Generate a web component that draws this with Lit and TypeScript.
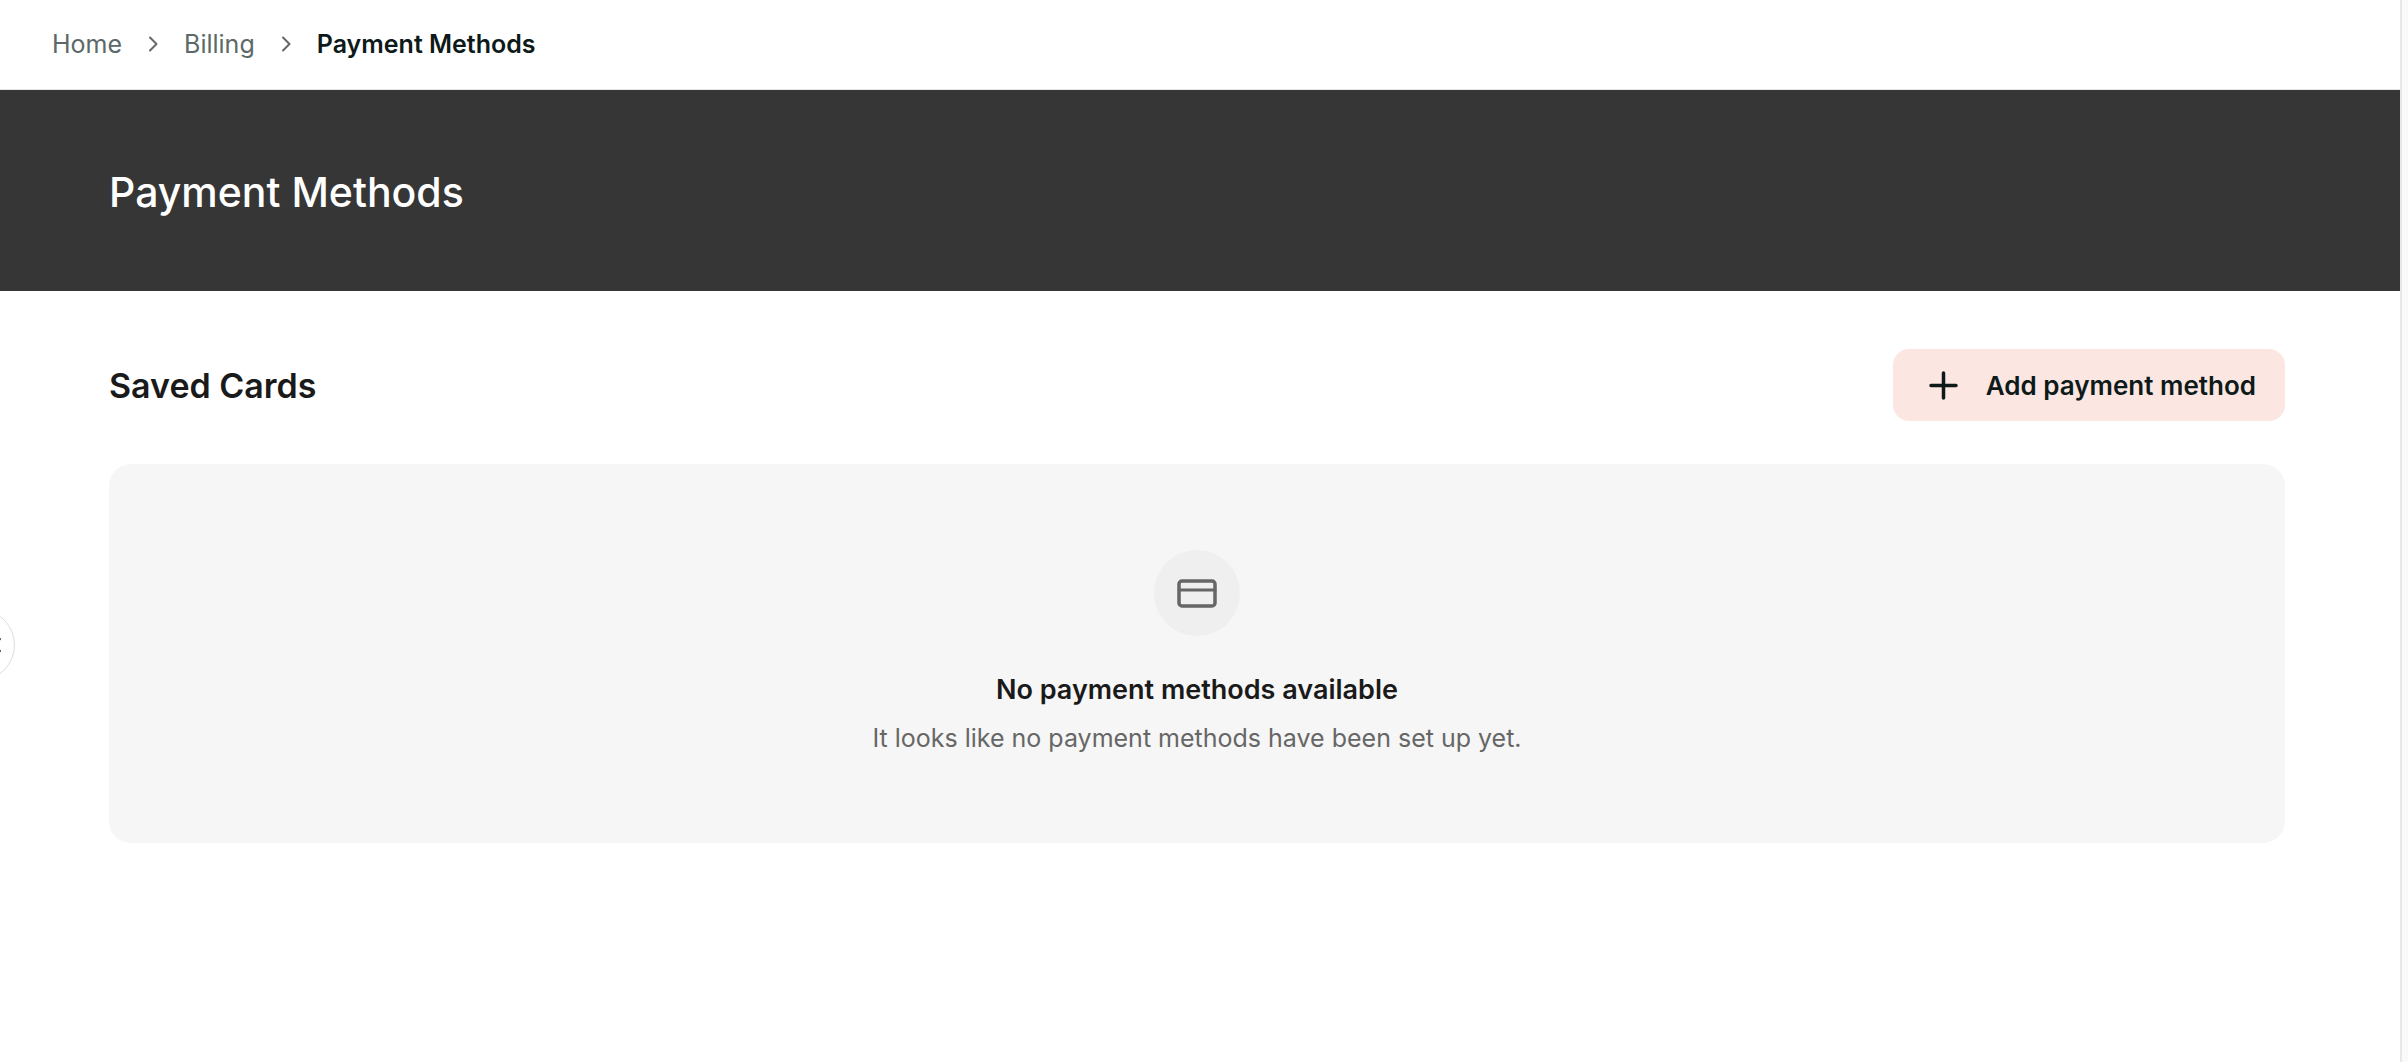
import { LitElement, html, css, svg } from "lit";
import { customElement } from "lit/decorators.js";

const chevronRight = html`<svg class="chevron" viewBox="0 0 10 18" aria-hidden="true">
  ${svg`<path d="M2 2.500l6.500 6.500-6.500 6.500" />`}
</svg>`;

@customElement("app-root")
export class AppRoot extends LitElement {
  static styles = css`
    :host {
      display: block;
      font-family: Inter, "Liberation Sans", sans-serif;
      color: #1a1a1a;
      background: #fafafa;
    }
    * {
      box-sizing: border-box;
    }
    svg {
      display: block;
      fill: none;
      stroke: currentColor;
      stroke-linecap: round;
      stroke-linejoin: round;
      flex: none;
    }
    .panel {
      position: relative;
      min-height: 100vh;
      margin-right: 6px;
      border-right: 2px solid #e8e8e8;
      background: #fff;
    }
    .crumbs {
      border-bottom: 1px solid #dfe6e4;
      padding: 28px 52px 29px;
    }
    .crumbs ol {
      display: flex;
      align-items: center;
      gap: 26px;
      margin: 0;
      padding: 0;
      list-style: none;
      font-size: 25px;
      line-height: 32px;
    }
    .crumbs li {
      display: flex;
      align-items: center;
      gap: 26px;
    }
    .crumbs a {
      color: #5c6968;
      text-decoration: none;
    }
    .crumbs .current {
      color: #0d1a19;
      font-weight: 600;
    }
    .chevron {
      width: 10px;
      height: 18px;
      stroke: #666;
      stroke-width: 2;
    }
    .hero {
      background: #363636;
      padding: 76px 109px 73px;
    }
    .hero h1 {
      margin: 0;
      color: #fff;
      font-size: 41px;
      font-weight: 500;
      line-height: 52px;
    }
    .content {
      padding: 58px 115px 58px 109px;
    }
    .heading {
      display: flex;
      align-items: center;
      justify-content: space-between;
      margin-bottom: 43px;
    }
    .heading h2 {
      margin: 0;
      padding-top: 2px;
      font-size: 34px;
      font-weight: 600;
      line-height: 44px;
    }
    .add {
      display: flex;
      align-items: center;
      gap: 28px;
      height: 72px;
      border: 0;
      border-radius: 16px;
      padding: 0 29px 0 36px;
      background: #fbe6e1;
      color: #0d1a19;
      font: 600 26px/32px Inter, "Liberation Sans", sans-serif;
      cursor: pointer;
    }
    .add span {
      padding-top: 2px;
    }
    .plus {
      width: 29px;
      height: 29px;
      stroke-width: 3.500;
    }
    .empty {
      display: flex;
      flex-direction: column;
      align-items: center;
      border-radius: 22px;
      padding: 86px 32px;
      background: #f6f6f6;
      text-align: center;
    }
    .badge {
      display: flex;
      align-items: center;
      justify-content: center;
      width: 86px;
      height: 86px;
      margin-bottom: 34px;
      border-radius: 50%;
      background: #efefef;
      color: #666;
    }
    .card {
      width: 40px;
      height: 30px;
      stroke-width: 3.500;
    }
    .empty h3 {
      margin: 0 0 9px;
      font-size: 27px;
      font-weight: 600;
      line-height: 40px;
    }
    .empty p {
      margin: 0;
      color: #666;
      font-size: 25px;
      line-height: 38px;
    }
    .collapse {
      position: absolute;
      top: 609px;
      left: -57px;
      display: flex;
      align-items: center;
      justify-content: flex-end;
      width: 72px;
      height: 72px;
      border: 1px solid #ddd;
      border-radius: 50%;
      padding: 0 13px 0 0;
      background: #fff;
      color: #444;
      cursor: pointer;
    }
    .collapse svg {
      width: 9px;
      height: 16px;
      stroke-width: 2;
    }
  `;

  render() {
    return html`
      <div class="panel">
        <nav class="crumbs" aria-label="Breadcrumb">
          <ol>
            <li><a href="#home">Home</a>${chevronRight}</li>
            <li><a href="#billing">Billing</a>${chevronRight}</li>
            <li class="current" aria-current="page">Payment Methods</li>
          </ol>
        </nav>
        <header class="hero"><h1>Payment Methods</h1></header>
        <main class="content">
          <div class="heading">
            <h2>Saved Cards</h2>
            <button class="add" type="button">
              <svg class="plus" viewBox="0 0 29 29" aria-hidden="true">
                <path d="M14.500 2v25M2 14.500h25" />
              </svg>
              <span>Add payment method</span>
            </button>
          </div>
          <section class="empty">
            <div class="badge">
              <svg class="card" viewBox="0 0 40 30" aria-hidden="true">
                <rect x="2" y="3" width="36" height="25" rx="3" />
                <path d="M2 12h36" stroke-width="3" />
              </svg>
            </div>
            <h3>No payment methods available</h3>
            <p>It looks like no payment methods have been set up yet.</p>
          </section>
        </main>
        <button class="collapse" type="button" aria-label="Collapse sidebar">
          <svg viewBox="0 0 9 16" aria-hidden="true"><path d="M8 2L2 8l6 6" /></svg>
        </button>
      </div>
    `;
  }
}
